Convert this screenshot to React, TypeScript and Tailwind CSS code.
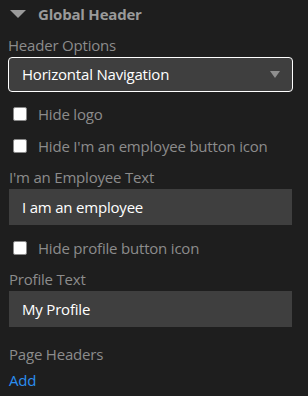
export default function App() {
  return (
    <div className="w-[308px] h-[396px] bg-[#1e1e1e] overflow-hidden font-['Open_Sans',sans-serif] text-[15px] tracking-[-0.2px] text-[#8c8c8c]">
      {/* Section title */}
      <div className="flex items-center h-[28px] pl-[10px]">
        <svg width="16" height="8" viewBox="0 0 16 8" className="shrink-0">
          <path d="M0 0h16L8 8z" fill="#9a9a9a" />
        </svg>
        <span className="ml-[12px] font-bold text-[#9a9a9a] leading-none">Global Header</span>
      </div>

      <div className="px-[8px]">
        <div className="mt-[7px] leading-[20px]">Header Options</div>
        <div className="mt-[2px] h-[35px] w-[285px] rounded-[4px] border-[1.5px] border-white bg-[#3f3f3f] flex items-center justify-between pl-[13px] pr-[12px]">
          <span className="text-white">Horizontal Navigation</span>
          <svg width="10" height="7" viewBox="0 0 10 7">
            <path d="M0 0h10L5 7z" fill="#8f8f8f" />
          </svg>
        </div>

        <label className="flex items-center mt-[14px] h-[16px]">
          <span className="ml-[5px] w-[14px] h-[14px] rounded-[2px] bg-white border border-[#8a8a8a]" />
          <span className="ml-[11px]">Hide logo</span>
        </label>
        <label className="flex items-center mt-[16px] h-[16px]">
          <span className="ml-[5px] w-[14px] h-[14px] rounded-[2px] bg-white border border-[#8a8a8a]" />
          <span className="ml-[11px]">Hide I'm an employee button icon</span>
        </label>

        <div className="mt-[13px] leading-[20px] pl-[1px]">I'm an Employee Text</div>
        <div className="mt-[2px] ml-[1px] h-[36px] w-[283px] bg-[#3f3f3f] flex items-center pl-[13px] text-white">
          I am an employee
        </div>

        <label className="flex items-center mt-[15px] h-[16px]">
          <span className="ml-[5px] w-[14px] h-[14px] rounded-[2px] bg-white border border-[#8a8a8a]" />
          <span className="ml-[11px]">Hide profile button icon</span>
        </label>

        <div className="mt-[13px] leading-[20px] pl-[1px]">Profile Text</div>
        <div className="mt-[2px] ml-[1px] h-[36px] w-[283px] bg-[#3f3f3f] flex items-center pl-[13px] text-white">
          My Profile
        </div>

        <div className="mt-[17px] leading-[20px] pl-[1px]">Page Headers</div>
        <div className="mt-[6px] leading-[20px] pl-[1px] text-[#2b8ef0]">Add</div>
      </div>
    </div>
  );
}
